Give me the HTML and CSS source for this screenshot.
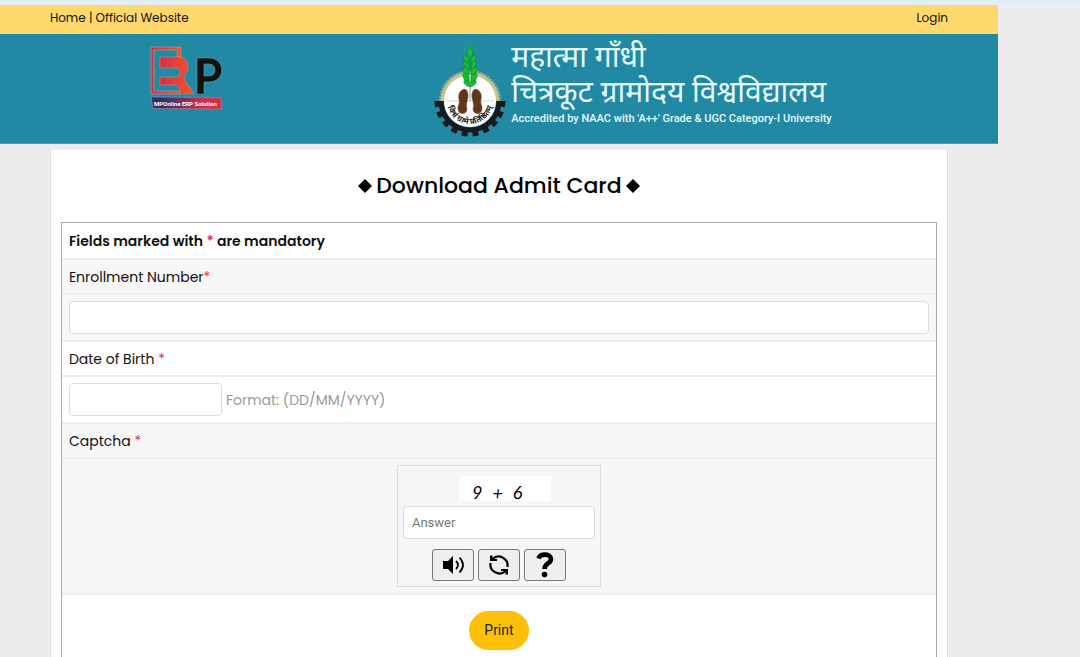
FILE: index.html
```html
<!DOCTYPE html>
<html lang="en">
<head>
<meta charset="utf-8">
<meta name="viewport" content="width=device-width, initial-scale=1">
<title>Download Admit Card</title>
<link rel="stylesheet" href="styles.css">
</head>
<body>
<div class="page">
  <nav class="topbar">
    <div class="topbar-links"><a href="#home">Home</a> | <a href="#official">Official Website</a></div>
    <a href="#login">Login</a>
  </nav>
  <header class="banner">
    <svg class="erp-logo" width="76" height="66" viewBox="0 0 76 66" role="img" aria-label="ERP, MPOnline ERP Solution">
      <defs>
        <linearGradient id="red" x1="0" x2="1"><stop offset="0" stop-color="#d52f45"/><stop offset="1" stop-color="#f2572c"/></linearGradient>
        <linearGradient id="ribbon" x1="0" x2="1"><stop offset="0.15" stop-color="#28326f"/><stop offset="0.75" stop-color="#d52d4c"/></linearGradient>
      </defs>
      <path d="M31 11V1H1v47h30v-3H4V4h23v7z" fill="url(#red)" stroke="#c58d91" stroke-width="0.7"/>
      <path d="M10 11h18c12 0 12 13 7 17-2 3 0 6 2 9l7 11H30v-5l-3-4H10v-8h16c5 0 5-9 0-9H10z" fill="url(#red)" stroke="#b98f7d" stroke-width="0.6"/>
      <path fill-rule="evenodd" d="M47 12h12c17 0 17 24 0 24h-5v12h-7zM54 18v12h5c8 0 8-12 0-12z" fill="#111" stroke="#6aa0a2" stroke-width="0.6"/>
      <path d="M1 51l70 .5 1 11.500-69-.5z" fill="url(#ribbon)" stroke="#bd7792" stroke-width="0.7"/>
      <text class="ribbon-text" x="4" y="60">MPOnline ERP Solution</text>
    </svg>
    <div class="university">
      <svg class="crest" width="74" height="100" viewBox="0 0 74 100" role="img" aria-label="University crest">
        <path d="M10 59a27 27 0 0 1 54 0" fill="none" stroke="#c7c28e" stroke-width="5"/>
        <path d="M7 59a30 30 0 0 1 60 0" fill="none" stroke="#8eaf91" stroke-width="2" stroke-dasharray="2 1"/>
        <circle cx="37" cy="59" r="26" fill="#fff"/>
        <path d="M8 59a29 29 0 0 0 58 0" fill="none" stroke="#17191d" stroke-width="5"/>
        <path d="M4 59a33 33 0 0 0 66 0" fill="none" stroke="#17191d" stroke-width="5" stroke-dasharray="6 4.860"/>
        <path d="M13 59h48" stroke="#aaa" stroke-width="0.5"/>
        <path d="M37 30v29" stroke="#8ba48d" stroke-width="1"/>
        <g fill="#62351f" stroke="#9a684a" stroke-width="0.500">
          <path d="M29 48c4-3 7 2 6 8-1 4-2 7-1 11 0 6-8 6-9 1-1-4 2-6 1-10-1-5 0-8 3-10z"/>
          <path d="M45 48c-4-3-7 2-6 8 1 4 2 7 1 11 0 6 8 6 9 1 1-4-2-6-1-10 1-5 0-8-3-10z"/>
        </g>
        <g fill="#19ba35" stroke="#078226" stroke-width="0.500">
          <path d="M37 5c-4 4-4 8 0 11 4-3 4-7 0-11z"/>
          <path d="M36 16c-5-5-6-3-5 1 1 3 3 4 5 4zM38 16c5-5 6-3 5 1-1 3-3 4-5 4z"/>
          <path d="M36 22c-5-5-6-3-5 1 1 3 3 4 5 4zM38 22c5-5 6-3 5 1-1 3-3 4-5 4z"/>
          <path d="M36 28c-5-5-7-3-6 1 1 3 3 4 6 4zM38 28c5-5 7-3 6 1-1 3-3 4-6 4z"/>
          <path d="M36 34c-5-5-7-3-6 1 1 3 3 5 6 5zM38 34c5-5 7-3 6 1-1 3-3 5-6 5z"/>
          <path d="M36 40c-4-3-6-2-5 1 1 2 3 3 6 4 3-1 5-2 6-4 1-3-1-4-5-1z"/>
        </g>
        <path d="M37 1v6M33 9l-2-4M41 9l2-4" stroke="#19ba35" stroke-width="1"/>
        <path id="motto" d="M14 59a23 23 0 0 0 46 0" fill="none"/>
        <text class="motto"><textPath href="#motto" startOffset="50%" text-anchor="middle">विश्वं  ग्रामे  प्रतिष्ठितम्</textPath></text>
      </svg>
      <div class="university-name">
        <div class="hindi" lang="hi">महात्मा गाँधी</div>
        <div class="hindi" lang="hi">चित्रकूट ग्रामोदय विश्वविद्यालय</div>
        <div class="accreditation">Accredited by NAAC with 'A++' Grade &amp; UGC Category-I University</div>
      </div>
    </div>
  </header>
  <main class="content">
    <h1 class="title">
      <svg width="14" height="14" viewBox="0 0 14 14" aria-hidden="true"><path d="M7 0l7 7-7 7-7-7z"/></svg>
      <span>Download Admit Card</span>
      <svg width="14" height="14" viewBox="0 0 14 14" aria-hidden="true"><path d="M7 0l7 7-7 7-7-7z"/></svg>
    </h1>
    <form class="form">
      <div class="row row-note">Fields marked with <span class="required">*</span> are mandatory</div>
      <div class="row shaded"><label for="enrollment">Enrollment Number<span class="required">*</span></label></div>
      <div class="row row-input shaded"><input class="field" id="enrollment" type="text"></div>
      <div class="row"><label for="dob">Date of Birth <span class="required">*</span></label></div>
      <div class="row row-input"><input class="field field-date" id="dob" type="text"><span class="hint">Format: (DD/MM/YYYY)</span></div>
      <div class="row shaded"><label for="answer">Captcha <span class="required">*</span></label></div>
      <div class="row row-captcha shaded">
        <div class="captcha">
          <div class="challenge"><span>9</span><span>+</span><span>6</span></div>
          <input class="field" id="answer" type="text" placeholder="Answer">
          <div class="captcha-actions">
            <button class="icon-button" type="button" aria-label="Play audio">
              <svg width="24" height="24" viewBox="0 0 24 24"><path d="M2 8h5l5-5v18l-5-5H2z"/><path d="M15 8q4 4 0 8M18.500 4.500q7 7.500 0 15" fill="none" stroke="#000" stroke-width="1.800"/></svg>
            </button>
            <button class="icon-button" type="button" aria-label="New challenge">
              <svg width="24" height="24" viewBox="0 0 24 24"><path d="M5.500 6A9 9 0 0 1 20.500 14M18.500 18A9 9 0 0 1 3.500 10" fill="none" stroke="#000" stroke-width="2.200"/><path d="M3 2.500h2.500V6H10v2H3zM21 21.500h-2.500V18H14v-2h7z"/></svg>
            </button>
            <button class="icon-button" type="button" aria-label="Help">
              <svg width="24" height="28" viewBox="0 0 24 28"><path d="M5.500 7.500c2-5.500 12.500-5 12.500.5 0 5-6.500 4-6.500 10" fill="none" stroke="#000" stroke-width="4.600"/><circle cx="11.500" cy="23.500" r="2.800"/></svg>
            </button>
          </div>
        </div>
      </div>
      <div class="row row-submit"><button class="print" type="button">Print</button></div>
    </form>
  </main>
</div>
</body>
</html>
```
FILE: styles.css
```css
* { box-sizing: border-box; }

body {
  margin: 0;
  background: #ededed;
  border-top: 5px solid #e3edf5;
  color: #111;
  font: 14px/20px Poppins, Inter, sans-serif;
}

.page {
  display: flex;
  flex-direction: column;
  width: 92.4%;
  min-height: calc(100vh - 5px);
}

.topbar {
  display: flex;
  justify-content: space-between;
  align-items: center;
  height: 29px;
  padding: 0 5% 3px;
  background: #ffd96c;
  font-size: 12px;
}

.topbar a {
  color: inherit;
  text-decoration: none;
}

.banner {
  display: flex;
  align-items: flex-start;
  height: 110px;
  padding: 8px 5% 0 15%;
  background: #2289a4;
  border-bottom: 1px solid #4c9db2;
}

.erp-logo {
  flex: none;
  margin-top: 4px;
}

.ribbon-text {
  fill: #fff;
  font: bold 6px Roboto, sans-serif;
}

.university {
  display: flex;
  margin-left: 26%;
  gap: 4px;
}

.crest { flex: none; }

.motto {
  fill: #222;
  font: bold 8px "Noto Sans Devanagari", "Noto Sans", sans-serif;
}

.university-name {
  color: #e6fbff;
  white-space: nowrap;
}

.hindi {
  font: 30px/35px "Noto Sans Devanagari", "Noto Sans", sans-serif;
}

.accreditation {
  font: 500 11px/14px Roboto, sans-serif;
}

.content {
  display: flex;
  flex: 1;
  flex-direction: column;
  margin: 6px 5% 0;
  padding: 0 10px;
  background: #fff;
  border: solid #ddd;
  border-width: 0 1px;
}

.title {
  display: flex;
  justify-content: center;
  align-items: center;
  gap: 4px;
  margin: 0;
  padding: 20px 0;
  color: #000;
  font-size: 22px;
  font-weight: 500;
  line-height: 32px;
}

.form {
  display: flex;
  flex: 1;
  flex-direction: column;
  border: 1px solid #aaa;
  border-bottom: 0;
}

.row {
  display: flex;
  align-items: center;
  min-height: 35px;
  padding: 0 7px;
  border-bottom: 2px solid #eee;
}

.row label, .row-note { white-space: pre; }

.shaded { background: #f7f7f7; }

.row-note {
  min-height: 37px;
  font-weight: 600;
}

.required { color: #dc3545; }

.row-input {
  gap: 4px;
  min-height: 47px;
}

.field {
  width: 100%;
  height: 33px;
  padding: 0 8px;
  background: #fff;
  border: 1px solid #ddd;
  border-radius: 4px;
  font: 13px Roboto, sans-serif;
}

.field::placeholder { color: #777; }

.field-date { width: 153px; }

.hint { color: #999; }

.row-captcha {
  justify-content: center;
  min-height: 136px;
}

.captcha {
  display: flex;
  flex-direction: column;
  align-items: center;
  width: 204px;
  padding: 10px 5px 5px;
  border: 1px solid #ddd;
}

.challenge {
  display: flex;
  gap: 10px;
  width: 92px;
  height: 25px;
  margin: 0 0 5px 12px;
  padding: 3px 0 0 13px;
  background: #fff;
  color: #000;
  font: italic 18px/26px Lato, sans-serif;
}

.captcha-actions {
  display: flex;
  gap: 4px;
  padding-top: 10px;
}

.icon-button {
  display: flex;
  justify-content: center;
  align-items: center;
  width: 42px;
  height: 32px;
  padding: 0;
  background: #efefef;
  border: 1px solid #777;
  border-radius: 3px;
}

.row-submit {
  flex: 1;
  justify-content: center;
  align-items: flex-start;
  padding-top: 16px;
  border-bottom: 0;
}

.print {
  padding: 0 15px;
  background: #ffc107;
  border: 0;
  border-radius: 20px;
  color: #212529;
  font: 14px/39px Roboto, sans-serif;
}
```
